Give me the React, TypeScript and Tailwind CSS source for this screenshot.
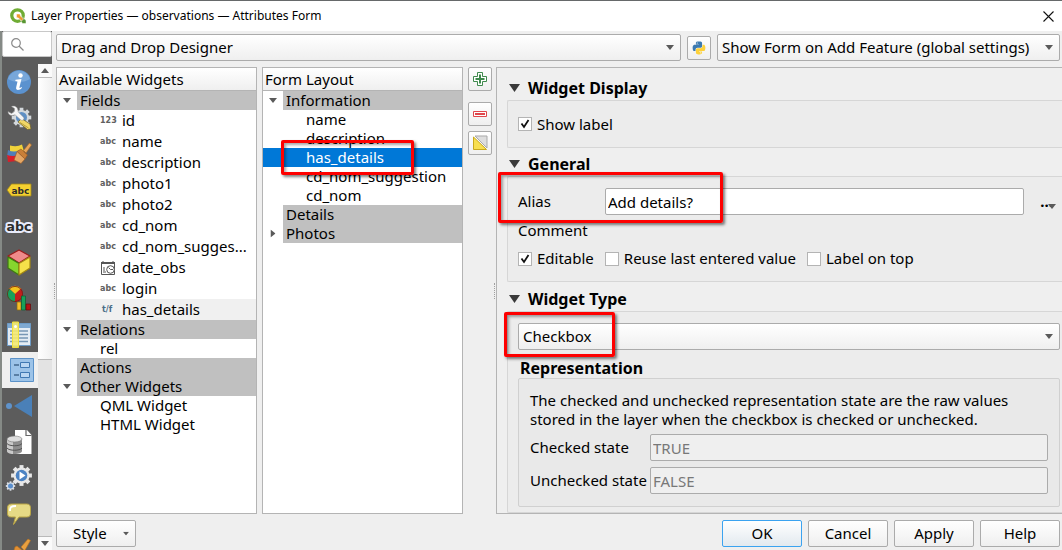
import { useId, type ReactNode } from "react";

/* ---------- small drawings ---------- */

function Arrow({ className = "" }: { className?: string }) {
  return (
    <svg viewBox="0 0 8 5" className={`h-[5px] w-2 ${className}`} aria-hidden="true">
      <path d="M0 0h8L4 5z" fill="#5a5a5a" />
    </svg>
  );
}

function QgisLogo() {
  return (
    <svg viewBox="0 0 32 32" className="size-4" aria-hidden="true">
      <circle cx="15" cy="15" r="11.500" fill="none" stroke="#6fac34" strokeWidth="6.500" />
      <path d="M18 20l6-3 8 8v6h-7z" fill="#589632" stroke="#fff" />
      <path d="M13 12h7l1 4 6 6-4 4-6-6-4-1z" fill="#ee9a2e" stroke="#fff" />
    </svg>
  );
}

function PythonLogo() {
  return (
    <svg viewBox="0 0 128 128" className="size-4" aria-hidden="true">
      <path
        fill="#3c7ab0"
        transform="translate(0 10)"
        d="M63.391 1.988c-4.222.02-8.252.379-11.8 1.007-10.45 1.846-12.346 5.71-12.346 12.837v9.411h24.693v3.137H29.977c-7.176 0-13.46 4.313-15.426 12.521-2.268 9.405-2.368 15.275 0 25.096 1.755 7.311 5.947 12.519 13.124 12.519h8.491V67.234c0-8.151 7.051-15.34 15.426-15.34h24.665c6.866 0 12.346-5.654 12.346-12.548V15.833c0-6.693-5.646-11.72-12.346-12.837-4.244-.706-8.645-1.027-12.866-1.008zM50.037 9.557c2.55 0 4.634 2.117 4.634 4.721 0 2.593-2.083 4.69-4.634 4.69-2.56 0-4.633-2.097-4.633-4.69-.001-2.604 2.073-4.721 4.633-4.721z"
      />
      <path
        fill="#fdd13a"
        transform="translate(0 10)"
        d="M91.682 28.38v10.966c0 8.5-7.208 15.655-15.426 15.655H51.591c-6.756 0-12.346 5.783-12.346 12.549v23.515c0 6.691 5.818 10.628 12.346 12.547 7.816 2.297 15.312 2.713 24.665 0 6.216-1.801 12.346-5.423 12.346-12.547v-9.412H63.938v-3.138h37.012c7.176 0 9.852-5.005 12.348-12.519 2.578-7.735 2.467-15.174 0-25.096-1.774-7.145-5.161-12.521-12.348-12.521h-9.268zM77.809 87.927c2.561 0 4.634 2.097 4.634 4.692 0 2.602-2.074 4.719-4.634 4.719-2.55 0-4.633-2.117-4.633-4.719 0-2.595 2.083-4.692 4.633-4.692z"
      />
    </svg>
  );
}

const gearTeeth = [0, 45, 90, 135, 180, 225, 270, 315];

function Gear({ cx, cy, r, fill }: { cx: number; cy: number; r: number; fill: string }) {
  return (
    <g fill={fill}>
      <circle cx={cx} cy={cy} r={r} />
      {gearTeeth.map((a) => (
        <rect key={a} x={cx - r * 0.25} y={cy - r * 1.3} width={r * 0.5} height={r * 0.6} transform={`rotate(${a} ${cx} ${cy})`} />
      ))}
    </g>
  );
}

const sections: { name: string; art: ReactNode }[] = [
  {
    name: "Information",
    art: (
      <>
        <circle cx="12" cy="12" r="12" fill="#5b92cf" />
        <path d="M1 9a11.500 11.500 0 0 1 22 0C17 13 7 13 1 9z" fill="#78a7da" />
        <g fill="#fff">
          <circle cx="13.500" cy="5.500" r="2.200" />
          <path d="M8.500 9.800 14.500 9 12.500 17c-.3 1.200.5 1.200 1.900 0l.6.700C12.800 20.500 8.300 21 9.200 17.200l1.300-5.600-2.200-.5z" />
        </g>
      </>
    ),
  },
  {
    name: "Source",
    art: (
      <>
        <Gear cx={14.500} cy={11.500} r={7.500} fill="#d3d8dc" />
        <circle cx="14.500" cy="11.500" r="5.500" fill="#5e8fc4" />
        <path d="m11 16 3.500-3.500 8.500 5.500 1 5-3.500.500z" fill="#f1d767" stroke="#6b5d26" strokeWidth=".7" />
        <path d="m13 16.500 8.500 5.500" stroke="#a8902c" strokeWidth=".8" />
        <path
          d="M1 5.500 4.500 7.500 7.500 5.500 7.500 2.500 4.500.500C8 -1 11.500 1.500 11 5.800l5.500 5.400c1.500 1.600-1 4.200-2.700 2.700L8 8.700C4.500 10.500 1 9 1 5.500z"
          fill="#f6f6f6"
          stroke="#8d8d8d"
          strokeWidth=".5"
        />
      </>
    ),
  },
  {
    name: "Symbology",
    art: (
      <>
        <path d="M3 3.500q7 2 12-1l2 7-14 1z" fill="#f0d33a" />
        <path d="M1 8q6 3 12 0v6L0 15z" fill="#4f7fb8" />
        <path d="M0 13q6 2 11 0l-1 6-9 1z" fill="#d81f2a" />
        <path d="m16.500 8.500 6-7.500 2 2-5.500 8z" fill="#e9a65b" stroke="#a56a28" strokeWidth=".6" />
        <path d="M10 9.500 14 7l6.500 6-2.500 4z" fill="#c97f38" stroke="#98561f" strokeWidth=".6" />
        <path d="M10 9.500 7 18l7 3.500 4-4.500z" fill="#e5a765" stroke="#98561f" strokeWidth=".6" />
      </>
    ),
  },
  {
    name: "Labels",
    art: (
      <>
        <path d="M0 12l4.500-6H24v12H4.500z" fill="#f4d030" stroke="#a58b16" strokeWidth=".8" />
        <text x="4.500" y="15.500" fontSize="9" fontWeight="700" fill="#2c2c2c">
          abc
        </text>
      </>
    ),
  },
  {
    name: "Masks",
    art: (
      <text x="-.5" y="16.500" fontSize="12.500" fontWeight="700" fill="#2c2c2c" stroke="#e9ecfb" strokeWidth="4" strokeLinejoin="round" paintOrder="stroke">
        abc
      </text>
    ),
  },
  {
    name: "3D View",
    art: (
      <g strokeLinejoin="round">
        <path d="M12 0 23 6 12 13 1 6z" fill="#f08a8a" stroke="#9b1c1c" strokeWidth="1.200" />
        <path d="M1 7 12 13.500V25L1 18z" fill="#86d62e" stroke="#3e7a12" strokeWidth="1.200" />
        <path d="M23 7 12 13.500V25l11-7z" fill="#f6e14a" stroke="#a48912" strokeWidth="1.200" />
      </g>
    ),
  },
  {
    name: "Diagrams",
    art: (
      <>
        <circle cx="8" cy="8" r="8" fill="#c21d1d" />
        <path d="M8 8 2 2.500A8 8 0 0 1 14 2.500z" fill="#f3c21c" />
        <path d="M8 8 2 2.500A8 8 0 0 0 8 16z" fill="#17a05a" />
        <circle cx="8" cy="8" r="7.600" fill="none" stroke="#70201a" strokeWidth=".8" />
        <path d="M10 16h4v8h-4z" fill="#f6be28" stroke="#8a6a12" strokeWidth=".7" />
        <path d="M14.500 10h4v14h-4z" fill="#17a05a" stroke="#0b5b31" strokeWidth=".7" />
        <path d="M19 18h4.500v6H19z" fill="#b31313" stroke="#630808" strokeWidth=".7" />
      </>
    ),
  },
  {
    name: "Fields",
    art: (
      <>
        <path d="M.5 1.500h23v22H.5z" fill="#e4ecf3" stroke="#6d9bc6" />
        <path d="M1 2h22v4H1z" fill="#7fa9d1" />
        <path d="M3 9h18M3 12.500h18M3 16h18M3 19.500h18" stroke="#7797b5" strokeWidth="1.300" />
        <path d="M5.500 0h6v25.500h-6z" fill="#f7ec6e" fillOpacity=".88" stroke="#f0e03c" />
        <circle cx="8.500" cy="4.500" r="1.500" fill="#fff" />
      </>
    ),
  },
  {
    name: "Attributes Form",
    art: (
      <>
        <path d="M.5.500h23v23H.5z" fill="#9cc3e8" stroke="#5b92c9" />
        <path d="M10.500 4.500h9v5h-9zM10.500 14.500h9v5h-9z" fill="#b9d6f2" stroke="#3f78b3" />
        <path d="M4 7h5M4 17h5" stroke="#44698d" strokeWidth="1.600" />
      </>
    ),
  },
  {
    name: "Joins",
    art: (
      <>
        <circle cx="2" cy="12" r="3" fill="#5f93cb" />
        <path d="M7 12 25 1v22z" fill="#4a80b8" />
      </>
    ),
  },
  {
    name: "Auxiliary Storage",
    art: (
      <>
        <path d="M8 0h12l4.500 5v19H8z" fill="#fff" />
        <path d="M19 0v5.500h5.500" fill="none" stroke="#666" strokeWidth="1.200" />
        <path d="M0 9v12c0 4 15 4 15 0V9z" fill="#8d8d8d" />
        <path d="M0 9v12c0 2 3 3 6 3V9z" fill="#c9c9c9" />
        <path d="M0 13.500c2 3 13 3 15 0M0 18c2 3 13 3 15 0" fill="none" stroke="#555" />
        <ellipse cx="7.500" cy="9" rx="7.500" ry="3" fill="#dcdcdc" stroke="#777" strokeWidth=".6" />
      </>
    ),
  },
  {
    name: "Actions",
    art: (
      <>
        <Gear cx={14.500} cy={9.500} r={8} fill="#e8e8e8" />
        <circle cx="14.500" cy="9.500" r="5.800" fill="#4c83c3" />
        <path d="M12.500 5.500 18.500 9.500l-6 4z" fill="#fff" />
        <Gear cx={3.500} cy={20} r={3.600} fill="#d9dfe6" />
        <circle cx="3.500" cy="20" r="2.500" fill="#5b8fcd" />
      </>
    ),
  },
  {
    name: "Display",
    art: (
      <>
        <path
          d="M4.500 2h15c3 0 4 1.500 4 4v5c0 3-1 4-4 4h-7.500L6.500 22.500 8.500 15h-4C1.500 15 .5 14 .5 11V6C.5 3.500 1.500 2 4.500 2z"
          fill="#e6da86"
          stroke="#b9a545"
        />
        <path d="M3 9C3 5 4 4 9 4" fill="none" stroke="#fff" strokeWidth="1.800" />
      </>
    ),
  },
  {
    name: "Rendering",
    art: (
      <>
        <path d="m14 9 7-8 2.500 1.500L17.500 13z" fill="#e9a040" stroke="#b8701c" strokeWidth=".6" />
        <path d="M8 9l2-1 8.500 7-2 8H4z" fill="#e08f34" stroke="#b8701c" strokeWidth=".6" />
      </>
    ),
  },
];

/* ---------- controls ---------- */

const box = "rounded-[2px] border border-[#ababab]";
const face = `${box} bg-linear-to-b from-white to-[#efefef]`;

function Combo({ label, value, className = "" }: { label: string; value: string; className?: string }) {
  return (
    <div className={`relative ${className}`}>
      <select aria-label={label} className={`h-[27px] w-full appearance-none pr-6 pl-1 ${face}`}>
        <option>{value}</option>
      </select>
      <Arrow className="pointer-events-none absolute top-[11px] right-[7px]" />
    </div>
  );
}

function Check({ label, checked = false }: { label: string; checked?: boolean }) {
  return (
    <label className="flex items-center gap-[5px]">
      <span className="relative size-[14px]">
        <input
          type="checkbox"
          defaultChecked={checked}
          className="peer block size-[14px] appearance-none border border-[#b4b4b4] bg-white"
        />
        <svg viewBox="0 0 14 14" className="pointer-events-none absolute inset-0 hidden peer-checked:block" aria-hidden="true">
          <path d="M3.500 6.500 6 10l4.500-7" fill="none" stroke="#111" strokeWidth="1.800" />
        </svg>
      </span>
      {label}
    </label>
  );
}

function Field({ label, value, labelWidth, disabled = false }: { label: string; value: string; labelWidth: string; disabled?: boolean }) {
  const id = useId();
  return (
    <div className="flex min-w-0 grow items-center">
      <label htmlFor={id} className={`shrink-0 whitespace-nowrap ${labelWidth}`}>
        {label}
      </label>
      <input
        id={id}
        defaultValue={value}
        disabled={disabled}
        className={`h-[27px] min-w-0 grow px-[2px] ${box} bg-white disabled:bg-[#efefef] disabled:text-[#787878]`}
      />
    </div>
  );
}

function Highlight({ className }: { className: string }) {
  return (
    <span
      aria-hidden="true"
      className={`pointer-events-none absolute z-10 rounded-[2px] border-3 border-[#fe0000] shadow-[2px_2px_3px_rgba(0,0,0,0.5),inset_2px_2px_3px_rgba(0,0,0,0.35)] ${className}`}
    />
  );
}

function Group({ title, className = "", children }: { title: string; className?: string; children: ReactNode }) {
  return (
    <section className={`flex flex-col ${className}`}>
      <h2 className="h-6 shrink-0 text-base leading-6 font-bold">
        <button type="button" className="flex h-6 items-center gap-2 pl-[2px]">
          <svg viewBox="0 0 11 8" className="h-2 w-[11px]" aria-hidden="true">
            <path d="M0 0h11L5.500 8z" fill="#3a3a3a" />
          </svg>
          {title}
        </button>
      </h2>
      <div className="grow rounded-l-[2px] border border-r-0 border-[#d6d6d6] bg-[#ececec]">{children}</div>
    </section>
  );
}

/* ---------- trees ---------- */

function Tree({ title, children }: { title: string; children: ReactNode }) {
  return (
    <div className="w-[201px] shrink-0 overflow-hidden border border-[#b4b4b4] bg-white">
      <div className="flex h-[23px] items-center border-b border-[#b4b4b4] bg-linear-to-b from-white to-[#efefef] pl-[2px]">{title}</div>
      <ul role="tree" aria-label={title}>
        {children}
      </ul>
    </div>
  );
}

function Branch({ label, state = "none" }: { label: string; state?: "open" | "closed" | "none" }) {
  return (
    <li role="treeitem" aria-selected="false" className="flex h-[19px] items-center">
      <span className="flex w-5 justify-center">
        {state === "open" && <Arrow />}
        {state === "closed" && <Arrow className="-rotate-90" />}
      </span>
      <span className="flex h-full grow items-center bg-[#c0c0c0] pl-[3px]">{label}</span>
    </li>
  );
}

function Leaf({ label, selected = false, children }: { label: string; selected?: boolean; children?: ReactNode }) {
  return (
    <li
      role="treeitem"
      aria-selected={selected}
      className="relative flex h-[19px] items-center pl-[43px] whitespace-nowrap aria-selected:bg-[#0078d7] aria-selected:text-white"
    >
      {label}
      {children}
    </li>
  );
}

function DateIcon() {
  return (
    <svg viewBox="0 0 16 16" className="size-4" fill="none" stroke="#555" aria-hidden="true">
      <path d="M1.500 3.500v11h13v-11M3 1v2M13 1v2" />
      <path d="M1 3h14" strokeWidth="2" />
      <circle cx="10.500" cy="9.500" r="3.800" fill="#fff" />
      <path d="M10.500 9.500 8.500 7.500M10.500 9.500h2.500M3 8h2M3 10h2M3 12h3" />
    </svg>
  );
}

const fields = [
  ["123", "id"],
  ["abc", "name"],
  ["abc", "description"],
  ["abc", "photo1"],
  ["abc", "photo2"],
  ["abc", "cd_nom"],
  ["abc", "cd_nom_sugges..."],
  ["date", "date_obs"],
  ["abc", "login"],
  ["t/f", "has_details"],
];

function FieldLeaf({ kind, label }: { kind: string; label: string }) {
  const bool = kind === "t/f";
  return (
    <li role="treeitem" aria-selected="false" className={`flex h-[21px] items-center pl-[43px] ${bool ? "bg-[#f0f0f0]" : ""}`}>
      <span
        className={`flex w-[22px] shrink-0 font-['DejaVu_Sans'] text-[8px] leading-[14px] font-bold ${bool ? "pl-[2px] text-[#4b6c86]" : "text-[#606060]"}`}
      >
        {kind === "date" ? <DateIcon /> : kind}
      </span>
      <span className="whitespace-nowrap">{label}</span>
    </li>
  );
}

function Splitter() {
  return (
    <div className="flex w-1 shrink-0 items-center justify-center">
      <span className="h-4 border-l border-dotted border-[#a0a0a0]" />
    </div>
  );
}

const toolButton = `flex h-6 w-6 items-center justify-center ${face}`;

export default function App() {
  return (
    <div className="flex h-screen flex-col overflow-hidden border-t border-[#66696a] bg-[#efefef] font-['Noto_Sans',sans-serif] text-[15px] leading-[19px] text-black">
      <header className="flex h-[30px] shrink-0 items-center bg-white pr-2 pl-[10px]">
        <QgisLogo />
        <h1 className="ml-[5px] grow text-xs">Layer Properties — observations — Attributes Form</h1>
        <button type="button" aria-label="Close">
          <svg viewBox="0 0 11 11" className="size-[11px]" aria-hidden="true">
            <path d="m.5.500 10 10m0-10-10 10" stroke="#111" strokeWidth="1.100" />
          </svg>
        </button>
      </header>

      <div className="flex min-h-0 grow">
        <nav aria-label="Sections" className="flex w-[52px] shrink-0 flex-col border-l-2 border-[#858a86] bg-[#5c5c5c]">
          <label className="mb-[7px] flex h-[26px] shrink-0 items-center rounded-[2px] border border-[#c8c8c8] bg-white pl-2">
            <svg viewBox="0 0 13 13" className="size-[13px] shrink-0" fill="none" stroke="#8a8a8a" strokeWidth="1.200" aria-hidden="true">
              <circle cx="5" cy="5" r="4.300" />
              <path d="m8 8 4.500 4.500" />
            </svg>
            <input type="search" aria-label="Search" className="w-5 min-w-0 outline-none" />
          </label>
          <div className="flex min-h-0 grow">
            <ul className="w-9 overflow-hidden font-['DejaVu_Sans']">
              {sections.map((s) => (
                <li key={s.name}>
                  <button
                    type="button"
                    aria-label={s.name}
                    aria-current={s.name === "Attributes Form"}
                    className="flex h-9 w-9 items-center pl-[5px] aria-[current=true]:bg-[#efefef] aria-[current=true]:pl-2"
                  >
                    <svg viewBox="0 0 24 24" className="size-6 overflow-visible">
                      {s.art}
                    </svg>
                  </button>
                </li>
              ))}
            </ul>
            <div className="flex grow flex-col bg-[#e3e3e3]" aria-hidden="true">
              <span className="flex h-[14px] shrink-0 items-center justify-center border-b border-[#b9b9b9] bg-[#fafafa]">
                <Arrow className="rotate-180" />
              </span>
              <span className="h-[58%] border-b border-[#b9b9b9] bg-linear-to-r from-white to-[#f1f1f1]" />
              <span className="mt-auto flex h-[14px] shrink-0 items-center justify-center border-t border-[#b9b9b9] bg-[#fafafa]">
                <Arrow />
              </span>
            </div>
          </div>
        </nav>
        <Splitter />

        <main className="flex min-w-0 grow flex-col">
          <div className="flex shrink-0 items-center gap-[6px] pt-[3px] pr-[2px]">
            <Combo label="Form designer" value="Drag and Drop Designer" className="grow" />
            <button type="button" aria-label="Python init function" className={toolButton}>
              <PythonLogo />
            </button>
            <Combo label="Show form" value="Show Form on Add Feature (global settings)" className="w-[343px] shrink-0" />
          </div>

          <div className="mt-[6px] flex min-h-0 grow">
            <div className="flex gap-[5px]">
              <Tree title="Available Widgets">
                <Branch label="Fields" state="open" />
                {fields.map(([kind, label]) => (
                  <FieldLeaf key={label} kind={kind} label={label} />
                ))}
                <Branch label="Relations" state="open" />
                <Leaf label="rel" />
                <Branch label="Actions" />
                <Branch label="Other Widgets" state="open" />
                <Leaf label="QML Widget" />
                <Leaf label="HTML Widget" />
              </Tree>
              <Tree title="Form Layout">
                <Branch label="Information" state="open" />
                <Leaf label="name" />
                <Leaf label="description" />
                <Leaf label="has_details" selected>
                  <Highlight className="-top-2 left-[18px] h-[35px] w-[133px]" />
                </Leaf>
                <Leaf label="cd_nom_suggestion" />
                <Leaf label="cd_nom" />
                <Branch label="Details" />
                <Branch label="Photos" state="closed" />
              </Tree>
              <div className="flex flex-col">
                <button type="button" aria-label="Add tab or group" className={toolButton}>
                  <svg viewBox="0 0 16 16" className="size-4" fill="#fff" stroke="#3f8a4d" aria-hidden="true">
                    <path d="M5.500 1.500h5v4h4v5h-4v4h-5v-4h-4v-5h4z" />
                    <path d="M8 3.500v9M3.500 8h9" strokeWidth="2" />
                  </svg>
                </button>
                <button type="button" aria-label="Remove" className={`mt-[11px] ${toolButton}`}>
                  <svg viewBox="0 0 16 16" className="size-4" fill="#fff" stroke="#e0474c" aria-hidden="true">
                    <path d="M1.500 5.500h13v5h-13z" />
                    <path d="M3 8h10" strokeWidth="2" />
                  </svg>
                </button>
                <button type="button" aria-label="Invert selection" className={`mt-[5px] ${toolButton}`}>
                  <svg viewBox="0 0 16 16" className="size-4" aria-hidden="true">
                    <path d="M3 1h12v12z" fill="#dedede" stroke="#a9a9a9" />
                    <path d="M1.500 2v12.500h13z" fill="#f7df50" stroke="#c9a91c" />
                  </svg>
                </button>
              </div>
            </div>
            <Splitter />

            <div className="flex min-w-0 grow flex-col border border-r-0 border-[#b4b4b4] pt-2 pl-[10px]">
              <Group title="Widget Display">
                <div className="flex h-[46px] items-center pl-[10px]">
                  <Check label="Show label" checked />
                </div>
              </Group>

              <Group title="General" className="mt-1">
                <div className="flex flex-col pt-[11px] pb-[13px] pl-[10px]">
                  <div className="relative flex items-center">
                    <Field label="Alias" value="Add details?" labelWidth="w-[87px]" />
                    <button type="button" aria-label="Data defined override" className="flex w-[38px] items-end justify-end pr-[6px] font-bold">
                      …<Arrow className="mb-[2px] -ml-[5px]" />
                    </button>
                    <Highlight className="-top-4 -left-5 h-[51px] w-[225px]" />
                  </div>
                  <div className="mt-[6px]">Comment</div>
                  <div className="mt-[9px] flex gap-[11px]">
                    <Check label="Editable" checked />
                    <Check label="Reuse last entered value" />
                    <Check label="Label on top" />
                  </div>
                </div>
              </Group>

              <Group title="Widget Type" className="mt-[5px] grow">
                <div className="pt-[11px] pr-[2px] pl-[10px]">
                  <div className="relative">
                    <Combo label="Widget type" value="Checkbox" />
                    <Highlight className="-top-[11px] -left-[14px] h-[45px] w-[111px]" />
                  </div>
                  <h3 className="mt-[9px] pl-[2px] text-base leading-[19px] font-bold">Representation</h3>
                  <div className="rounded-[2px] border border-[#d0d0d0] bg-[#e9e9e9] pt-3 pr-[11px] pb-3 pl-[11px]">
                    <p>
                      The checked and unchecked representation state are the raw values
                      <br />
                      stored in the layer when the checkbox is checked or unchecked.
                    </p>
                    <div className="mt-[5px] flex flex-col gap-[6px]">
                      <Field label="Checked state" value="TRUE" labelWidth="w-[120px]" disabled />
                      <Field label="Unchecked state" value="FALSE" labelWidth="w-[120px]" disabled />
                    </div>
                  </div>
                </div>
              </Group>
            </div>
          </div>

          <footer className="flex shrink-0 gap-[6px] pt-[6px] pr-[2px] pb-[3px]">
            <button type="button" className={`mr-auto flex h-[27px] w-20 items-center justify-between pr-[5px] pl-4 ${face}`}>
              Style
              <Arrow className="scale-75" />
            </button>
            <button type="button" className="h-[27px] w-20 rounded-[2px] border border-[#3ba3f0] bg-linear-to-b from-white to-[#e2e9ef]">
              OK
            </button>
            {["Cancel", "Apply", "Help"].map((name) => (
              <button key={name} type="button" className={`h-[27px] w-20 ${face}`}>
                {name}
              </button>
            ))}
          </footer>
        </main>
      </div>
    </div>
  );
}
